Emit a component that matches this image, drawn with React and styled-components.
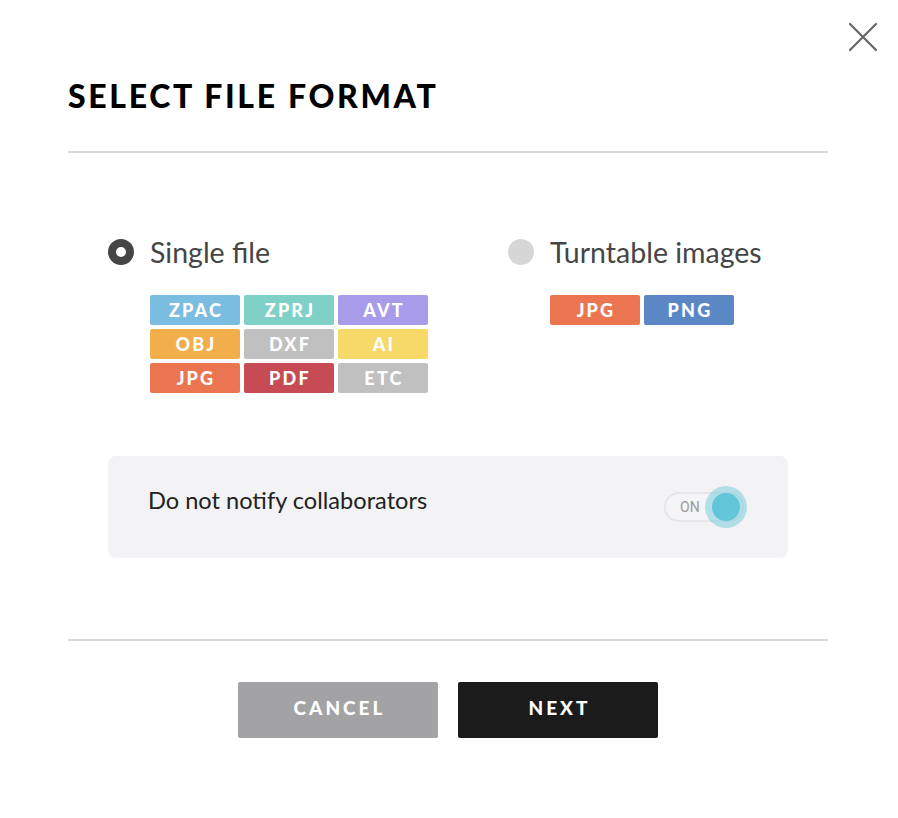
import React from "react";
import styled, { createGlobalStyle } from "styled-components";

const Global = createGlobalStyle`
  html, body { margin: 0; padding: 0; background: #ffffff; }
  body { font-family: "Lato", "Noto Sans", sans-serif; color: #222; }
  * { box-sizing: border-box; }
`;

const Dialog = styled.div`
  position: relative;
  width: 898px;
  height: 818px;
  padding: 76px 70px 0 68px;
  display: flex;
  flex-direction: column;
`;

const CloseButton = styled.button`
  position: absolute;
  top: 22px;
  right: 20px;
  width: 30px;
  height: 30px;
  padding: 0;
  border: none;
  background: none;
  cursor: pointer;
  display: flex;
  align-items: center;
  justify-content: center;
`;

const Title = styled.h1`
  margin: 0;
  font-family: "Lato", sans-serif;
  font-weight: 900;
  font-size: 32px;
  line-height: 40px;
  letter-spacing: 2.65px;
  color: #000;
`;

const Divider = styled.hr`
  margin: ${(p) => p.$top}px 0 0;
  border: none;
  height: 2px;
  background: #d6d6d6;
`;

const Body = styled.div`
  padding: 0 40px;
`;

const Options = styled.div`
  display: grid;
  grid-template-columns: 400px 1fr;
  margin-top: 84px;
`;

const Option = styled.div`
  display: flex;
  flex-direction: column;
`;

const RadioRow = styled.label`
  display: flex;
  align-items: center;
  gap: 16px;
  height: 30px;
  cursor: pointer;
`;

const RadioDot = styled.span`
  width: 26px;
  height: 26px;
  border-radius: 50%;
  flex: none;
  background: ${(p) => (p.$checked ? "#ffffff" : "#d6d6d6")};
  border: ${(p) => (p.$checked ? "8px solid #454545" : "none")};
`;

const RadioLabel = styled.span`
  font-size: 28.5px;
  color: #454545;
  font-weight: 400;
`;

const ChipGrid = styled.div`
  display: grid;
  grid-template-columns: repeat(3, 90px);
  gap: 4px;
  margin: 28px 0 0 42px;
`;

const Chip = styled.span`
  height: 30px;
  border-radius: 2px;
  background: ${(p) => p.$color};
  color: #fff;
  font-weight: 900;
  font-size: 18px;
  letter-spacing: 2.2px;
  padding-left: 2px;
  display: flex;
  align-items: center;
  justify-content: center;
`;

const NotifyBox = styled.div`
  margin-top: 63px;
  height: 102px;
  border-radius: 8px;
  background: #f3f3f5;
  display: flex;
  align-items: center;
  justify-content: space-between;
  padding: 0 44px 0 40px;
`;

const NotifyText = styled.span`
  font-size: 23.6px;
  color: #222;
  margin-bottom: 14px;
`;

const Toggle = styled.div`
  position: relative;
  width: 80px;
  height: 30px;
  border-radius: 15px;
  border: 2px solid #e6e6e8;
  background: #f5f5f7;
  display: flex;
  align-items: center;
  padding-left: 14px;
`;

const ToggleText = styled.span`
  font-family: "Roboto", sans-serif;
  font-size: 14px;
  color: #9a9a9a;
`;

const Knob = styled.span`
  position: absolute;
  top: 50%;
  right: 2px;
  width: 28px;
  height: 28px;
  margin-top: -14px;
  border-radius: 50%;
  background: #63c6d8;
  box-shadow: 0 0 0 7px rgba(99, 198, 216, 0.45);
`;

const Actions = styled.div`
  display: flex;
  justify-content: center;
  gap: 20px;
  margin-top: 41px;
`;

const Button = styled.button`
  width: 200px;
  height: 56px;
  border: none;
  border-radius: 2px;
  background: ${(p) => (p.$primary ? "#1b1b1b" : "#a3a3a5")};
  color: #fff;
  font-family: "Lato", sans-serif;
  font-weight: 900;
  font-size: 19px;
  letter-spacing: 3px;
  padding: 0 0 5px 3px;
  cursor: pointer;
`;

const singleFormats = [
  ["ZPAC", "#7bbde0"],
  ["ZPRJ", "#7fd1c8"],
  ["AVT", "#a89be9"],
  ["OBJ", "#f2ae4a"],
  ["DXF", "#c0c0c0"],
  ["AI", "#f7d96a"],
  ["JPG", "#ec7551"],
  ["PDF", "#c64b55"],
  ["ETC", "#c0c0c0"],
];

const turntableFormats = [
  ["JPG", "#ec7551"],
  ["PNG", "#5b87c5"],
];

export default function App() {
  return (
    <>
      <Global />
      <Dialog>
        <CloseButton aria-label="Close">
          <svg width="30" height="30" viewBox="0 0 30 30">
            <path d="M2 2 L28 28 M28 2 L2 28" stroke="#666" strokeWidth="2.2" strokeLinecap="round" />
          </svg>
        </CloseButton>
        <Title>SELECT FILE FORMAT</Title>
        <Divider $top={35} />
        <Body>
          <Options>
            <Option>
              <RadioRow>
                <RadioDot $checked />
                <RadioLabel>Single file</RadioLabel>
              </RadioRow>
              <ChipGrid>
                {singleFormats.map(([name, color]) => (
                  <Chip key={name} $color={color}>{name}</Chip>
                ))}
              </ChipGrid>
            </Option>
            <Option>
              <RadioRow>
                <RadioDot />
                <RadioLabel>Turntable images</RadioLabel>
              </RadioRow>
              <ChipGrid>
                {turntableFormats.map(([name, color]) => (
                  <Chip key={name} $color={color}>{name}</Chip>
                ))}
              </ChipGrid>
            </Option>
          </Options>
          <NotifyBox>
            <NotifyText>Do not notify collaborators</NotifyText>
            <Toggle>
              <ToggleText>ON</ToggleText>
              <Knob />
            </Toggle>
          </NotifyBox>
        </Body>
        <Divider $top={81} />
        <Actions>
          <Button>CANCEL</Button>
          <Button $primary>NEXT</Button>
        </Actions>
      </Dialog>
    </>
  );
}
